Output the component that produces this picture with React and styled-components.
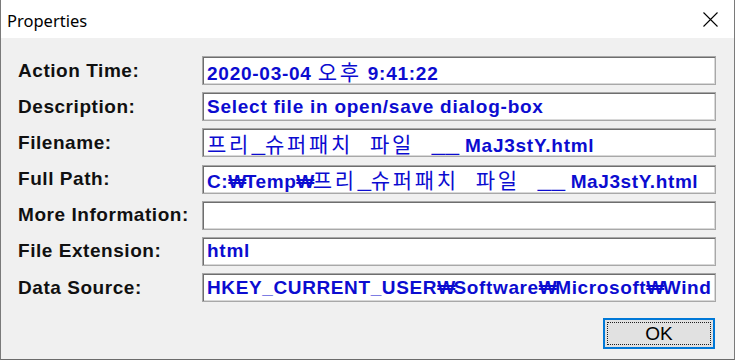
import React from "react";
import styled, { createGlobalStyle } from "styled-components";

const GlobalStyle = createGlobalStyle`
  html, body {
    margin: 0;
    padding: 0;
    background: #ffffff;
  }
`;

const Window = styled.div`
  box-sizing: border-box;
  width: 735px;
  height: 360px;
  display: flex;
  flex-direction: column;
  border-left: 1px solid #7a7a7a;
  border-right: 1px solid #7a7a7a;
  border-bottom: 1px solid #6b6b6b;
  background: #f0f0f0;
`;

const TitleBar = styled.div`
  height: 38px;
  flex: none;
  display: flex;
  align-items: center;
  justify-content: space-between;
  background: #ffffff;
  padding: 0 16px 0 6px;
`;

const Title = styled.span`
  font-family: "Noto Sans", "Open Sans", sans-serif;
  font-size: 16.5px;
  color: #000000;
  margin-top: 2px;
`;

const CloseIcon = styled.svg`
  width: 15px;
  height: 15px;
  margin-top: 1px;
`;

const Body = styled.div`
  flex: 1;
  padding: 18px 18px 0 17px;
  display: flex;
  flex-direction: column;
`;

const Fields = styled.div`
  display: grid;
  grid-template-columns: 184px 1fr;
  grid-auto-rows: 29px;
  row-gap: 7.2px;
  align-items: center;
`;

const Label = styled.div`
  font-family: "Liberation Sans", Arial, sans-serif;
  font-weight: bold;
  font-size: 19px;
  letter-spacing: 0.55px;
  color: #101010;
`;

const ValueBox = styled.div`
  box-sizing: border-box;
  height: 29px;
  display: flex;
  align-items: center;
  padding: 0 0 0 4px;
  background: #ffffff;
  border: 1px solid #a8a8a8;
  box-shadow: inset 1px 1px 0 #6e6e6e, inset -1px -1px 0 #d8d8d8;
`;

const ValueText = styled.span`
  white-space: pre;
  font-family: "Liberation Sans", Arial, sans-serif;
  font-weight: bold;
  font-size: 19px;
  letter-spacing: ${(p) => p.$spacing ?? 0.75}px;
  color: #0c0cd0;
`;

const cellWidth = { char: 22, space: 17, under: 14 };

/* the Korean fallback font lays its glyphs out in even cells */
const HangulCell = styled.span`
  display: inline-block;
  width: ${(p) => cellWidth[p.$kind]}px;
  letter-spacing: 0;
  font-family: "Noto Sans CJK KR", sans-serif;
  font-weight: 400;
  font-size: 21px;
  transform: ${(p) => (p.$kind === "under" ? "scaleX(1.25)" : "none")};
  transform-origin: 0 50%;
`;

const Won = styled.span`
  letter-spacing: -2.5px;
  margin-right: 1px;
`;

const ButtonRow = styled.div`
  display: flex;
  justify-content: flex-end;
  margin-top: 16px;
  padding-right: 1px;
`;

const OkButton = styled.button`
  box-sizing: border-box;
  width: 112px;
  height: 31px;
  padding: 2px;
  border: 2px solid #0078d7;
  background: #e1e1e1;
  display: flex;
  cursor: pointer;
`;

const FocusRect = styled.span`
  flex: 1;
  display: flex;
  align-items: center;
  justify-content: center;
  border: 1px dotted #202020;
  font-family: "Liberation Sans", Arial, sans-serif;
  font-size: 19px;
  color: #000000;
`;

const fields = [
  { label: "Action Time:", value: "2020-03-04 오후 9:41:22" },
  { label: "Description:", value: "Select file in open/save dialog-box" },
  { label: "Filename:", value: "프리_슈퍼패치 파일 __ MaJ3stY.html" },
  {
    label: "Full Path:",
    value: "C:₩Temp₩프리_슈퍼패치 파일 __ MaJ3stY.html",
    spacing: 0.6,
  },
  { label: "More Information:", value: "" },
  { label: "File Extension:", value: "html" },
  {
    label: "Data Source:",
    value: "HKEY_CURRENT_USER₩Software₩Microsoft₩Wind",
    spacing: 0.62,
  },
];

const KOREAN_RUN = /([\uAC00-\uD7A3](?:[\uAC00-\uD7A3_ ]*[\uAC00-\uD7A3_])?|₩)/;

const kindOf = (ch) => (ch === "_" ? "under" : ch === " " ? "space" : "char");

function renderValue(text) {
  return text
    .split(KOREAN_RUN)
    .filter(Boolean)
    .map((part, i) => {
      if (part === "₩") return <Won key={i}>{part}</Won>;
      if (/[\uAC00-\uD7A3]/.test(part)) {
        return [...part].map((ch, j) => (
          <HangulCell key={`${i}-${j}`} $kind={kindOf(ch)}>
            {ch}
          </HangulCell>
        ));
      }
      return part;
    });
}

export default function App() {
  return (
    <>
      <GlobalStyle />
      <Window>
        <TitleBar>
          <Title>Properties</Title>
          <CloseIcon viewBox="0 0 15 15">
            <path d="M0.5 0.5 L14.5 14.5 M14.5 0.5 L0.5 14.5" stroke="#000" strokeWidth="1.1" />
          </CloseIcon>
        </TitleBar>
        <Body>
          <Fields>
            {fields.map((f) => (
              <React.Fragment key={f.label}>
                <Label>{f.label}</Label>
                <ValueBox>
                  <ValueText $spacing={f.spacing}>{renderValue(f.value)}</ValueText>
                </ValueBox>
              </React.Fragment>
            ))}
          </Fields>
          <ButtonRow>
            <OkButton>
              <FocusRect>OK</FocusRect>
            </OkButton>
          </ButtonRow>
        </Body>
      </Window>
    </>
  );
}
